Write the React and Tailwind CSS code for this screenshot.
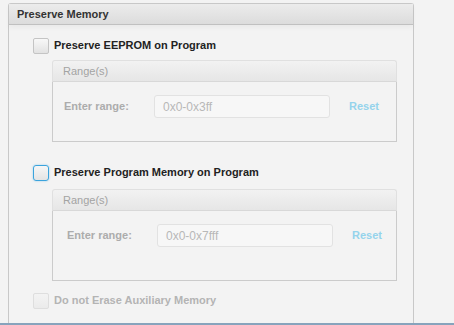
import React from 'react';

const font = { fontFamily: '"Liberation Sans", Arial, sans-serif' };

function Checkbox({ focused = false, disabled = false }) {
    if (focused) {
        return (
            <div className="w-[16px] h-[16px] shrink-0 rounded-[3px] border-[1.5px] border-[#3ba3dc] bg-gradient-to-b from-[#f6f6f6] to-[#e4e4e4] shadow-[0_0_2px_#8cc8ea]" />
        );
    }
    return (
        <div
            className={
                disabled
                    ? 'w-[16px] h-[16px] shrink-0 rounded-[2px] border border-[#dedede] bg-gradient-to-b from-[#f3f3f3] to-[#ebebeb]'
                    : 'w-[16px] h-[16px] shrink-0 rounded-[2px] border border-[#c4c4c4] bg-gradient-to-b from-[#f8f8f8] to-[#e2e2e2]'
            }
        />
    );
}

function RangeGroup({ placeholder, labelPad, bottomPad }) {
    return (
        <div className="w-[345px] flex flex-col">
            {/* Header */}
            <div className="h-[22px] flex items-center pl-[10px] rounded-t-[3px] border border-[#e0e0e0] border-b-[#d8d8d8] bg-gradient-to-b from-[#f2f2f2] to-[#e6e6e6]">
                <span className="text-[11px] text-[#a3a3a3]">Range(s)</span>
            </div>
            {/* Body */}
            <div className={`border border-t-0 border-[#cbcbcb] ${labelPad} pt-[13px] ${bottomPad} flex items-center`}>
                <span className="w-[90px] text-[11px] font-bold text-[#acacac]">Enter range:</span>
                <div className="w-[176px] h-[23px] flex items-center pl-[8px] rounded-[3px] border border-[#e2e2e2] bg-[#f7f7f7] text-[12px] text-[#b8b8b8]">
                    {placeholder}
                </div>
                <span className="ml-[19px] text-[11px] font-bold text-[#95d3ec]">Reset</span>
            </div>
        </div>
    );
}

export default function App() {
    return (
        <div className="h-[325px] w-[454px] flex flex-col bg-[#f3f3f3] overflow-hidden" style={font}>
            <div className="flex-1 pl-[8px] pt-[3px] min-h-0">
                <div className="w-[406px] h-full flex flex-col border border-b-0 border-[#c8c8c8] rounded-t-[3px]">
                    {/* Panel header */}
                    <div className="h-[21px] shrink-0 flex items-center pl-[8px] border-b border-[#c0c0c0] bg-gradient-to-b from-[#ececec] to-[#dcdcdc] shadow-[0_3px_5px_rgba(0,0,0,0.04)]">
                        <span className="text-[11px] font-bold text-[#333]">Preserve Memory</span>
                    </div>

                    {/* Panel body */}
                    <div className="flex flex-col pl-[24px]">
                        <div className="mt-[13px] h-[15px] flex items-center gap-[5px]">
                            <Checkbox />
                            <span className="text-[11px] leading-none font-bold text-[#222]">Preserve EEPROM on Program</span>
                        </div>

                        <div className="mt-[7px] ml-[19px]">
                            <RangeGroup placeholder="0x0-0x3ff" labelPad="pl-[11px]" bottomPad="pb-[23px]" />
                        </div>

                        <div className="mt-[23px] h-[15px] flex items-center gap-[5px]">
                            <Checkbox focused />
                            <span className="text-[11px] leading-none font-bold text-[#222]">Preserve Program Memory on Program</span>
                        </div>

                        <div className="mt-[9px] ml-[19px]">
                            <RangeGroup placeholder="0x0-0x7fff" labelPad="pl-[14px]" bottomPad="pb-[33px]" />
                        </div>

                        <div className="mt-[12px] h-[15px] flex items-center gap-[5px]">
                            <Checkbox disabled />
                            <span className="text-[11px] leading-none font-bold text-[#b4b4b4]">Do not Erase Auxiliary Memory</span>
                        </div>
                    </div>
                </div>
            </div>
            <div className="h-[2px] shrink-0 bg-[#87a3bc]" />
        </div>
    );
}
